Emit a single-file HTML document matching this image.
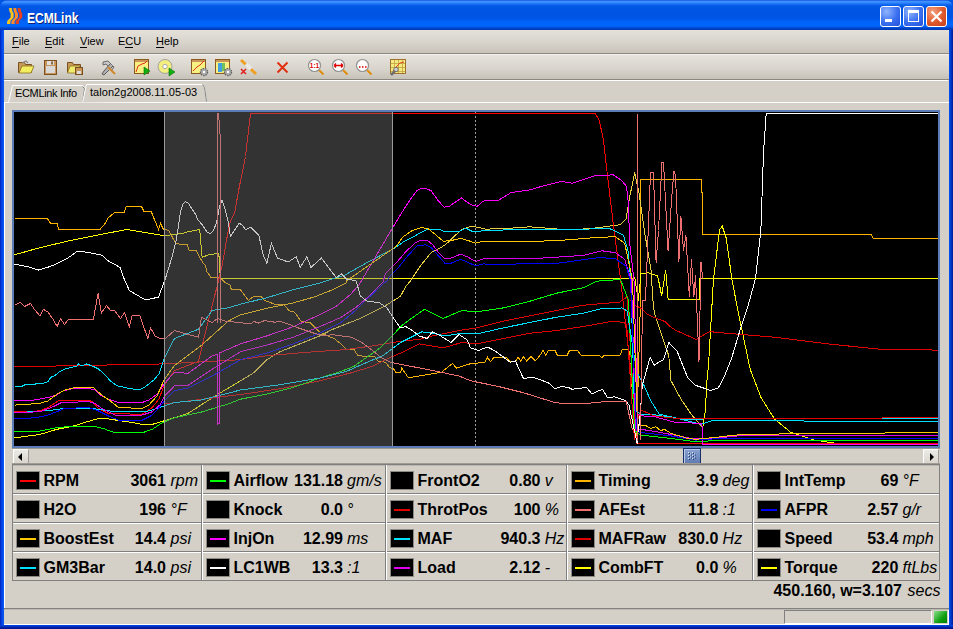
<!DOCTYPE html><html><head><meta charset="utf-8"><style>
*{margin:0;padding:0;box-sizing:border-box}
html,body{width:953px;height:629px;overflow:hidden;background:#0054e3;font-family:"Liberation Sans",sans-serif}
.a{position:absolute}
#title{left:0;top:0;width:953px;height:30px;border-radius:8px 8px 0 0;
 background:linear-gradient(#0a3ed8 0px,#3d8fff 1px,#3d95ff 2px,#1a6ff5 4px,#0058e6 6px,#0054e3 12px,#0055e5 18px,#0061f5 21px,#0066ff 26px,#0058e8 27px,#0046cc 28px,#0038b0 30px)}
#ttext{left:27px;top:9.5px;color:#fff;font-weight:bold;font-size:14px;line-height:16px;transform:scaleX(0.86);transform-origin:0 0;text-shadow:1px 1px 0 #0a1e7a}
.tb{top:6px;width:21px;height:21px;border:1px solid #fff;border-radius:3px;background:radial-gradient(circle at 30% 25%,#8fb4ff,#3a6ff0 55%,#2250d8)}
#client{left:4px;top:30px;width:945px;height:595px;background:#d4d0c8}
#menubar{left:4px;top:30px;width:945px;height:24px;background:linear-gradient(#e4e1da,#d9d5cd 50%,#c8c4ba);border-bottom:1px solid #8c8880}
.menu{top:35px;font-size:11px;color:#000;line-height:13px}
.menu u{text-decoration:none;border-bottom:1px solid #000}
#toolbar{left:4px;top:54px;width:945px;height:26px;background:linear-gradient(#e6e3dc,#d8d4cc 60%,#c6c2b8);border-top:1px solid #f4f2ee;border-bottom:1px solid #8c8880}
#tabline{left:4px;top:80px;width:944px;height:1px;background:#fff}
#panel{left:4px;top:102px;width:945px;height:506px;border-top:1px solid #fff;border-left:1px solid #fff;background:#d4d0c8}
.tab{font-size:11px;color:#000;line-height:13px}
#chart{left:12px;top:110px;width:928px;height:338px;border:2px solid #5b7db7;background:#000;overflow:hidden}
#sb{left:12px;top:448px;width:928px;height:16px;background:#d4d0c8;border-top:1px solid #9c988f}
.btn{position:absolute;top:0;width:16px;height:16px;background:linear-gradient(#ecebe6,#d8d4cc);border-top:1px solid #fff;border-left:1px solid #fff;border-right:1px solid #a09c94;border-bottom:1px solid #a09c94}
.cell{position:absolute;height:29px}
.sw{position:absolute;width:24px;height:19px;background:#000;border:1px solid #8c8a84}
.sw i{position:absolute;left:3px;top:8px;width:16px;height:2px}
.t{position:absolute;font-size:16px;white-space:nowrap;line-height:18px;color:#000}
.b{font-weight:bold}
.it{font-style:italic}
</style></head><body>
<div class="a" id="title"></div>
<svg class="a" style="left:0;top:0" width="30" height="30" viewBox="0 0 30 30">
<path d="M9,8 L11.8,8 L12.6,12 L13.6,13 L13.6,17.5 L10.4,21 L10.2,24 L7,24 L7.2,21 L10.6,17.5 L10.6,13 L9.6,12 Z" fill="#ffc418"/>
<path d="M13.3,8 L16.1,8 L16.9,12 L17.9,13 L17.9,17.5 L14.7,21 L14.5,24 L11.3,24 L11.5,21 L14.9,17.5 L14.9,13 L13.9,12 Z" fill="#ff8a28"/>
<path d="M17.6,8 L20.4,8 L21.2,12 L22.2,13 L22.2,17.5 L19,21 L18.8,24 L15.6,24 L15.8,21 L19.2,17.5 L19.2,13 L18.2,12 Z" fill="#e8401c"/>
</svg>
<div class="a" id="ttext">ECMLink</div>
<div class="a tb" style="left:880px"></div>
<div class="a" style="left:885px;top:19px;width:7px;height:3px;background:#fff"></div>
<div class="a tb" style="left:903px"></div>
<div class="a" style="left:908px;top:10px;width:11px;height:12px;border:1px solid #fff;border-top:3px solid #fff"></div>
<div class="a tb" style="left:926px;background:radial-gradient(circle at 30% 25%,#f5a080,#e0582c 55%,#c8401a)"></div>
<svg class="a" style="left:926px;top:6px" width="21" height="21"><path d="M5.5,5.5 L15.5,15.5 M15.5,5.5 L5.5,15.5" stroke="#fff" stroke-width="2.2"/></svg>
<div class="a" id="client"></div>
<div class="a" id="menubar"></div>
<div class="a menu" style="left:12px"><u>F</u>ile</div>
<div class="a menu" style="left:45px"><u>E</u>dit</div>
<div class="a menu" style="left:80px"><u>V</u>iew</div>
<div class="a menu" style="left:118px">E<u>C</u>U</div>
<div class="a menu" style="left:156px"><u>H</u>elp</div>
<div class="a" id="toolbar"></div>
<div class="a" id="tabline"></div>
<svg class="a" style="left:0;top:54px" width="420" height="26" viewBox="0 54 420 26">
<!-- open folder -->
<g>
<path d="M18.5,62.5 L24.5,62.5 L25.5,64.5 L31.5,64.5 L31.5,72.5 L18.5,72.5 Z" fill="#c89a58" stroke="#7a5020"/>
<path d="M19,73 L22,66 L34,66 L31,73 Z" fill="#f2ee60" stroke="#8a7020" stroke-width="0.8"/>
<path d="M22,63 L26,61 L28,63" fill="none" stroke="#888" stroke-width="1.2"/>
</g>
<!-- floppy -->
<g>
<rect x="44.5" y="60.5" width="12" height="14" fill="#c89458" stroke="#7a5020"/>
<rect x="46" y="66" width="9" height="7" fill="#d8d8d8"/>
<rect x="47" y="61" width="7" height="4" fill="#e0e0e0"/>
<rect x="51" y="61.5" width="2" height="3" fill="#8a6a40"/>
</g>
<!-- folder + floppy -->
<g>
<path d="M67.5,62.5 L72.5,62.5 L73.5,64.5 L80.5,64.5 L80.5,72.5 L67.5,72.5 Z" fill="#c89a58" stroke="#7a5020"/>
<path d="M67.5,73 L70,66 L80,66 L78,73 Z" fill="#f0ec70" stroke="#8a7020" stroke-width="0.8"/>
<rect x="75.5" y="67.5" width="7" height="7" fill="#c89458" stroke="#7a5020"/>
<rect x="77" y="71" width="4" height="3" fill="#ddd"/>
</g>
<!-- tools -->
<g>
<path d="M103,62 L108,61 L114,67 L112,70 L106,64 L103,65 Z" fill="#c8c8c8" stroke="#606060" stroke-width="0.9"/>
<path d="M110,64 L104,71 L102,74 L104,75 L107,72 L113,66" fill="#b0b0b0" stroke="#505050" stroke-width="0.9"/>
<path d="M108,67 L115,74" stroke="#d08a30" stroke-width="2.2"/>
</g>
<!-- chart play -->
<g>
<rect x="134.5" y="59.5" width="14" height="14" fill="#f8f080" stroke="#8a5a20"/>
<rect x="135" y="60" width="13" height="2" fill="#c89458"/>
<path d="M136,72 L138,66 L142,64 L145,63 L147,61" fill="none" stroke="#e03020" stroke-width="1"/>
<path d="M144,67 L150,71 L144,75 Z" fill="#10b010" stroke="#087008" stroke-width="0.6"/>
</g>
<!-- cd play -->
<g>
<circle cx="165" cy="66.5" r="7" fill="#f2ee80" stroke="#a0a0a0"/>
<circle cx="165" cy="66.5" r="2.2" fill="#fff" stroke="#999" stroke-width="0.8"/>
<path d="M169,68 L175,72 L169,76 Z" fill="#10b010" stroke="#087008" stroke-width="0.6"/>
</g>
<!-- chart gear -->
<g>
<rect x="191.5" y="59.5" width="14" height="14" fill="#f8f080" stroke="#8a5a20"/>
<rect x="192" y="60" width="13" height="2" fill="#c89458"/>
<path d="M193,71 L197,67 L200,65 L204,61" fill="none" stroke="#e03020"/>
<circle cx="204" cy="72" r="3.6" fill="#a8a8a8" stroke="#606060" stroke-width="1.2" stroke-dasharray="1.5,1"/>
<circle cx="204" cy="72" r="1.2" fill="#fff"/>
</g>
<!-- chart gear 2 -->
<g>
<rect x="215.5" y="59.5" width="14" height="14" fill="#f8f080" stroke="#8a5a20"/>
<rect x="216" y="60" width="13" height="2" fill="#c89458"/>
<rect x="218" y="63" width="4" height="9" fill="#40a0e0"/>
<rect x="222" y="63" width="3" height="8" fill="#70c060"/>
<circle cx="228" cy="72" r="3.6" fill="#a8a8a8" stroke="#606060" stroke-width="1.2" stroke-dasharray="1.5,1"/>
<circle cx="228" cy="72" r="1.2" fill="#fff"/>
</g>
<!-- pencil x -->
<g>
<path d="M241,60 L256,74" stroke="#f0a020" stroke-width="3"/>
<path d="M246,64 L251,69" stroke="#e8e8e8" stroke-width="4"/>
<path d="M241,69 L246,74 M246,69 L241,74" stroke="#e02020" stroke-width="1.6"/>
</g>
<!-- red X -->
<path d="M277.5,62.5 L287.5,72.5 M287.5,62.5 L277.5,72.5" stroke="#e03010" stroke-width="2"/>
<!-- magnifiers -->
<g>
<line x1="319" y1="70" x2="323.5" y2="74.5" stroke="#e09010" stroke-width="2.2"/>
<circle cx="314.5" cy="65.5" r="6" fill="#fff" stroke="#909090" stroke-width="1.2"/>
<text x="314.5" y="68" font-size="6.5" font-weight="bold" fill="#e00000" text-anchor="middle" font-family="Liberation Sans">1:1</text>
</g>
<g>
<line x1="343" y1="70" x2="347.5" y2="74.5" stroke="#e09010" stroke-width="2.2"/>
<circle cx="338.5" cy="65.5" r="6" fill="#fff" stroke="#909090" stroke-width="1.2"/>
<path d="M334,65.5 L343,65.5 M334,65.5 L336,63.5 M334,65.5 L336,67.5 M343,65.5 L341,63.5 M343,65.5 L341,67.5" stroke="#e00000" stroke-width="1.3"/>
</g>
<g>
<line x1="367" y1="70" x2="371.5" y2="74.5" stroke="#e09010" stroke-width="2.2"/>
<circle cx="362.5" cy="65.5" r="6" fill="#fff" stroke="#909090" stroke-width="1.2"/>
<path d="M359,67 h1.5 M362,67 h1.5 M365,67 h1.5" stroke="#e00000" stroke-width="1.5"/>
</g>
<!-- grid wrench -->
<g>
<rect x="390.5" y="59.5" width="15" height="14" fill="#f4ec80" stroke="#a07030"/>
<path d="M394.5,60 V73 M398.5,60 V73 M402.5,60 V73 M391,63.5 H405 M391,67.5 H405 M391,71.5 H405" stroke="#c0a040" stroke-width="0.8"/>
<path d="M393,71 L397,66 L400,63 L404,62" fill="none" stroke="#e04020"/>
<path d="M391,75 L396,70" stroke="#707070" stroke-width="2.5"/>
<circle cx="396" cy="69.5" r="2.2" fill="#d0d0d0" stroke="#606060" stroke-width="0.8"/>
</g>
</svg>

<div class="a" id="panel"></div>
<svg class="a" style="left:4px;top:82px" width="210" height="22">
<path d="M4.5,20.5 L8.5,3.5 L78.5,3.5 L80.5,6.5 L78.5,20.5" fill="#d4d0c8" stroke="#fff"/>
<path d="M78.5,4.5 L80.5,6.5 L78.5,20.5" fill="none" stroke="#808080"/>
<path d="M78.5,20.5 L82.5,2.5 L198.5,2.5 L200.5,5.5 L202.5,19.5" fill="#d4d0c8" stroke="#fff"/>
<path d="M198.5,2.5 L200.5,5.5 L202.5,19.5" fill="none" stroke="#808080"/>
</svg>
<div class="a tab" style="left:15px;top:87px;letter-spacing:-0.35px">ECMLink Info</div>
<div class="a tab" style="left:90px;top:86px;letter-spacing:0.05px">talon2g2008.11.05-03</div>
<div class="a" id="chart"></div>
<svg class="a" style="left:14px;top:112px" width="924" height="334" viewBox="14 112 924 334">
<line x1="475.5" y1="112" x2="475.5" y2="446" stroke="#a0a0a0" stroke-dasharray="2,2"/>
<g fill="none" shape-rendering="crispEdges" transform="translate(0.5,0.5)">
<polyline points="14.0,217.5 46.6,217.5 50.0,222.8 56.7,222.8 58.0,229.0 99.4,229.0 104.8,222.8 107.5,217.5 114.0,212.0 123.5,212.0 126.0,205.5 140.8,205.5 143.5,211.0 150.7,211.0 158.0,229.0 160.0,222.8 163.0,229.0 168.2,229.7 175.3,243.3 186.5,244.0 188.8,250.4 196.0,250.4 199.2,256.8 202.4,262.3 204.7,264.7 206.3,271.1 210.3,276.6 215.9,277.4 219.8,277.4 223.8,281.4 229.4,284.6 231.0,289.4 240.0,289.2 247.9,299.8 253.2,295.8 261.1,296.4 263.7,299.8 274.3,303.7 283.5,304.3 288.8,310.3 294.1,311.7 300.7,320.9 309.9,322.2 315.2,327.5 319.2,331.5 327.1,335.4 333.7,338.0 340.3,343.3 345.5,348.6 353.5,349.1 357.4,355.2 374.6,356.5 377.2,360.5 385.1,361.8 389.1,367.1 393.0,368.4 395.7,372.3 400.0,372.3 401.2,367.5 407.9,377.3 434.6,372.8 441.3,371.5 452.0,363.0 456.0,367.5 470.0,363.2 484.5,361.8 487.2,356.6 489.8,361.3 493.8,356.6 505.6,356.6 509.6,361.3 514.9,361.3 517.5,356.6 520.2,360.5 522.8,356.0 526.0,360.5 530.7,356.0 534.7,360.5 539.2,355.2 542.6,350.0 545.2,355.2 547.9,350.0 554.5,350.0 557.1,355.2 566.4,355.2 569.0,350.0 576.9,350.0 580.9,355.2 599.4,355.2 601.2,357.1 603.3,355.2 619.2,355.2 621.8,349.2 628.4,349.2 636.0,440.0 640.0,300.0" stroke="#ffb400" stroke-width="1"/>
<polyline points="640.0,300.0 640.2,178.5 700.5,178.5 700.5,192.3 701.7,192.3 701.7,233.5 870.4,233.5 873.0,238.3 938.0,238.3" stroke="#ffb400" stroke-width="1"/>
<polyline points="14.0,254.3 40.0,247.0 70.0,240.0 100.0,234.0 126.0,229.0 145.0,232.0 164.0,235.3 174.5,233.7 182.5,232.9 185.7,231.7 199.2,229.0 201.6,256.8 207.9,254.4 218.3,252.8 219.8,276.6 220.6,278.2 634.0,278.2 634.2,276.3 637.7,300.0 639.6,282.9 640.5,273.1 647.7,272.3 657.2,275.5 661.2,295.4 665.2,269.2 667.6,298.6 698.8,299.3 699.5,278.0 938.0,278.0" stroke="#ffff00" stroke-width="1"/>
<polyline points="240.0,380.3 253.2,372.3 266.4,359.2 279.6,351.2 292.8,346.0 306.0,340.7 319.2,335.4 332.3,328.8 345.5,323.5 358.7,318.3 371.9,311.7 385.1,305.1 400.0,295.8 405.2,286.0 410.3,280.0 420.0,265.3 430.5,252.2 441.0,246.9 447.9,241.7 454.9,234.7 461.9,228.6 470.7,225.9 477.7,226.8 485.0,228.6 502.7,228.2 529.4,226.3 569.5,229.5 596.2,227.4 620.2,224.1 625.5,218.8 629.5,194.8 634.3,172.1 638.9,194.8 644.2,232.2 650.9,272.2 652.0,296.2 653.9,312.4 668.3,355.4 670.4,380.0 680.4,398.5 690.5,413.6 700.6,425.3 702.3,427.9" stroke="#e8d040" stroke-width="1"/>
<polyline points="702.3,427.0 704.8,410.2 706.5,380.0 708.0,365.0 712.9,280.0 719.0,229.5 721.7,225.5 725.7,237.5 731.6,280.0 739.0,318.0 749.7,368.8 760.4,396.8 773.8,418.2 789.8,431.5 813.8,439.5 840.5,443.6 938.0,444.0" stroke="#ffff00" stroke-width="1"/>
<polyline points="14.0,437.3 39.2,434.0 56.0,428.9 72.8,425.6 86.2,421.4 97.9,418.0 108.0,418.5 128.2,421.4 141.6,423.9 151.7,423.9 160.1,421.4 174.0,417.2 187.6,412.8 217.0,394.0 240.0,380.3" stroke="#ffff00" stroke-width="1"/>
<polyline points="14.0,411.3 39.2,410.4 47.6,407.1 57.7,400.4 64.4,399.5 87.9,399.5 92.9,402.0 97.9,407.9 108.0,413.0 141.6,413.8 151.7,407.1 158.4,398.7 163.4,385.3 174.0,370.1 198.0,360.8 206.0,327.4 216.7,285.4 221.4,266.3 227.8,229.7 230.2,220.2 234.2,212.3 238.1,190.0 245.0,156.0 250.0,113.0 594.8,113.0 598.8,120.0 602.8,138.7 606.8,173.4 612.2,218.8 620.2,280.0 629.5,363.4 633.5,403.5 636.0,443.0 938.0,443.0" stroke="#ff0000" stroke-width="1"/>
<polyline points="14.0,366.3 164.0,363.4 240.0,359.2 266.4,355.2 306.0,351.8 345.5,349.1 371.9,345.4 393.0,342.0 400.0,340.7 418.6,338.9 431.9,335.4 458.6,330.0 476.0,327.4 502.7,320.7 529.4,315.4 556.1,310.0 582.8,304.7 610.0,302.4 619.5,301.5 626.7,296.2 632.0,380.0 634.0,440.0" stroke="#e00000" stroke-width="1"/>
<polyline points="630.0,300.0 635.3,305.3 640.5,307.7 647.2,313.9 650.0,315.3 656.8,318.2 664.4,321.0 669.2,325.8 675.6,330.0 695.6,338.9 708.9,331.1 720.0,332.2 773.8,336.7 827.2,343.4 880.6,348.8 938.0,349.6" stroke="#e00000" stroke-width="1"/>
<polyline points="163.5,403.5 240.0,394.0 279.6,388.2 319.2,380.3 350.8,372.3 371.9,365.8 387.8,357.8 400.0,352.6 418.6,343.4 442.6,347.4 461.3,342.0 476.0,343.4 502.7,338.0 529.4,332.7 556.1,330.0 582.8,326.0 612.9,320.6 623.4,322.0 626.2,324.8 633.5,432.9 640.1,409.4 653.6,415.3 678.8,418.3 732.5,417.8 938.0,417.4" stroke="#e00000" stroke-width="1"/>
<polyline points="14.0,431.4 39.2,430.6 56.0,427.2 72.8,425.6 92.9,425.6 103.0,428.1 114.7,432.3 141.6,432.3 151.7,428.9 161.8,422.2 174.0,417.2 201.0,411.5 227.6,403.5 240.0,398.7 266.4,393.5 292.8,386.9 319.2,377.6 340.3,371.0 353.5,365.8 366.6,356.5 379.8,347.3 393.0,334.1 400.0,326.2 405.2,322.0 424.0,308.7 442.6,318.0 461.3,310.0 476.0,311.4 502.7,307.4 529.4,300.7 556.1,292.7 582.8,287.3 596.2,280.7 620.0,279.0 628.0,300.0 634.0,430.0 640.1,434.6 670.4,437.9 695.6,441.3 720.7,439.6 938.0,439.5" stroke="#00ff00" stroke-width="1"/>
<polyline points="14.0,386.1 20.7,386.1 24.1,384.4 34.1,383.6 42.5,382.7 47.6,381.1 50.1,376.9 54.3,375.2 59.3,371.0 64.4,368.5 71.1,366.8 76.1,366.0 77.8,363.4 81.2,365.4 86.2,363.4 92.9,366.0 97.9,368.5 103.0,372.7 109.7,380.2 116.4,385.3 128.2,387.8 138.2,389.5 145.0,386.1 153.4,379.4 158.4,373.5 161.8,363.4 164.3,356.7 167.6,350.0 174.0,338.0 198.0,328.7 211.6,310.0 227.6,307.4 240.0,303.7 266.4,297.2 292.8,289.2 319.2,282.6 333.0,278.0 343.8,274.9 365.0,262.9 392.7,248.2 393.7,247.8 402.5,241.7 411.2,237.3 420.0,232.1 427.0,228.6 439.2,228.6 443.6,231.2 458.4,231.2 465.4,227.7 472.4,231.2 482.9,230.3 502.7,229.5 556.1,229.0 609.5,228.2 622.9,234.8 627.7,250.9 630.3,280.0 634.0,410.0 640.1,413.6 655.3,414.4 680.4,418.6 938.0,417.5" stroke="#00e0ff" stroke-width="1"/>
<polyline points="14.0,412.1 30.8,411.3 47.6,410.1 64.4,407.9 87.9,407.6 97.9,408.8 114.7,411.3 145.0,411.3 156.7,407.9 174.0,402.0 201.0,399.5 240.0,389.5 279.6,384.2 319.2,377.6 345.5,371.0 366.6,361.8 382.5,355.2 393.0,347.3 400.0,342.0 405.2,339.4 421.2,331.4 431.9,332.7 445.3,335.4 461.3,332.7 476.0,333.5 502.7,327.4 529.4,322.0 556.1,316.7 582.8,312.7 601.5,307.9 619.5,308.1 621.0,307.2 626.7,310.5 636.2,371.5 643.5,385.0 650.2,400.1 658.6,413.6 678.8,418.3 700.6,423.7 710.7,420.3 938.0,420.8" stroke="#00e0ff" stroke-width="1"/>
<polyline points="14.0,400.4 34.1,399.5 47.6,397.0 56.0,394.5 62.7,390.3 71.1,388.3 89.6,388.3 94.6,389.5 99.6,394.5 108.0,398.7 118.1,402.0 141.6,402.0 148.3,399.5 156.7,393.7 163.4,383.6 174.0,371.8 187.6,372.8 211.6,355.4 216.5,353.8 216.5,423.8 219.0,423.0 219.0,352.5 240.0,343.3 266.4,335.4 292.8,326.2 319.2,314.3 335.0,306.4 350.8,293.2 358.7,284.0 392.9,226.0 402.5,210.2 411.2,197.1 416.5,190.1 420.0,188.0 425.2,188.0 430.5,190.1 437.4,199.7 443.6,206.7 448.8,205.8 454.9,201.5 461.0,197.6 466.3,201.5 472.4,205.0 476.8,205.8 482.9,200.6 486.7,200.0 497.4,200.0 510.7,192.0 529.4,189.4 542.8,185.4 561.4,180.9 572.0,182.8 593.5,175.5 612.7,174.3 620.7,179.6 625.4,185.1 627.3,194.7 629.5,245.5 633.5,280.0 637.0,414.0 640.1,415.3 653.6,416.1 675.4,422.0 700.6,422.8 702.0,427.0 702.0,444.0 938.0,444.0" stroke="#ff00ff" stroke-width="1"/>
<polyline points="14.0,412.1 39.2,411.3 52.6,406.2 61.0,402.0 87.9,401.2 94.6,402.9 101.3,407.9 114.7,414.6 141.6,414.6 151.7,411.3 160.1,403.7 164.3,395.3 174.0,385.3 187.6,384.8 211.6,368.8 240.0,351.2 266.4,344.6 292.8,336.7 319.2,326.2 340.3,317.0 356.1,306.4 366.6,297.2 382.5,281.3 385.0,273.1 395.5,262.7 406.0,250.4 414.7,242.6 420.0,239.6 427.0,239.9 432.2,244.3 437.4,251.3 444.4,258.3 451.4,257.4 460.2,253.6 467.2,256.5 475.0,260.9 482.9,258.3 502.7,257.5 542.8,257.5 582.8,254.9 601.5,250.3 614.9,252.2 624.2,258.9 628.2,272.2 631.0,280.0 635.0,428.0 640.1,428.7 660.3,432.0 690.5,437.9 704.0,438.8 737.5,435.4 938.0,435.0" stroke="#e000f0" stroke-width="1"/>
<polyline points="14.0,418.5 35.8,417.2 47.6,414.6 56.0,411.3 64.4,407.9 87.9,407.1 97.9,410.4 108.0,415.5 118.1,419.7 141.6,419.7 151.7,414.6 160.1,405.4 164.3,399.5 174.0,390.3 187.6,387.5 211.6,375.5 240.0,359.2 266.4,352.6 292.8,343.3 319.2,332.8 340.3,322.2 356.1,309.0 366.6,298.5 385.1,281.3 386.5,280.7 388.5,276.6 397.2,267.9 407.7,254.8 416.5,245.5 425.2,244.3 430.5,246.9 437.4,254.8 444.4,262.7 449.7,263.0 454.9,260.9 460.2,258.8 467.2,261.8 475.0,265.3 482.9,263.5 502.7,263.7 556.1,262.9 598.8,257.0 614.9,258.3 625.5,265.5 630.0,280.0 636.0,430.0 640.1,432.0 670.4,435.4 695.6,439.6 720.7,437.9 938.0,437.5" stroke="#0000ff" stroke-width="1"/>
<polyline points="14.0,404.6 39.2,402.9 47.6,400.4 57.7,392.8 64.4,389.5 76.1,386.6 92.9,386.9 96.3,390.3 101.3,394.5 109.7,400.4 118.1,407.1 141.6,407.9 148.3,404.6 156.7,395.3 163.4,379.4 174.0,365.1 201.0,344.8 227.6,320.7 240.0,314.3 266.4,307.7 292.8,302.4 313.9,296.4 332.3,289.2 345.5,282.6 346.5,280.0 395.5,246.0 402.5,236.4 411.2,230.3 420.0,227.3 427.0,227.7 435.7,234.7 442.7,240.8 451.4,239.9 460.2,237.8 467.2,239.9 475.0,242.6 482.9,240.8 502.7,241.5 556.1,240.2 596.2,237.0 614.9,236.2 624.2,242.8 628.2,261.5 632.0,280.0 637.0,425.0 640.1,425.3 645.2,425.0 650.2,427.9 655.3,426.2 660.3,430.4 663.7,428.7 670.4,432.9 687.2,437.9 695.6,438.8 704.0,437.9 714.0,437.1 734.2,434.6 757.7,433.7 938.0,432.0" stroke="#ffc800" stroke-width="1"/>
<polyline points="14.0,263.7 27.4,266.3 38.0,269.5 48.7,266.3 54.0,264.2 67.4,257.5 76.7,250.9 86.0,251.6 102.0,254.9 107.5,260.2 119.5,266.9 123.5,278.0 128.8,290.0 144.8,299.4 158.0,296.7 164.9,278.0 171.4,256.8 176.1,237.7 180.1,210.7 182.5,203.5 184.9,201.1 188.0,202.7 191.2,208.3 195.2,213.8 196.8,218.6 201.6,224.2 206.3,231.3 209.5,233.2 212.7,230.5 215.9,222.6 219.1,205.9 221.4,199.5 224.6,209.1 227.8,221.8 229.9,236.1 235.0,228.2 238.9,222.6 242.1,225.0 245.0,229.0 250.3,226.8 258.4,234.8 262.4,253.5 266.4,262.9 270.9,242.8 277.0,257.5 287.7,261.5 295.7,256.2 299.7,266.9 306.4,256.2 310.4,266.9 321.0,257.5 327.8,266.9 335.8,277.0 341.0,273.5 346.5,278.9 350.5,279.3 355.8,280.7 359.8,295.4 366.5,300.7 378.5,302.0 386.5,307.4 393.2,318.0 399.9,327.4 405.2,326.0 411.9,330.0 418.6,335.4 426.6,338.0 431.9,331.4 440.0,335.4 450.6,342.0 458.6,334.0 466.6,339.4 470.0,347.3 477.9,350.0 487.2,346.5 493.8,350.0 503.0,356.6 509.6,361.8 514.9,360.5 522.8,377.7 533.4,377.1 539.2,379.0 549.2,383.0 554.5,388.2 561.1,386.1 567.7,386.9 571.6,388.8 586.2,386.9 591.4,393.5 596.7,390.9 602.0,388.8 607.3,397.5 613.9,396.2 625.0,400.1 628.4,404.3 636.8,443.5 637.6,430.4 639.3,418.6 641.8,385.0 649.6,356.8 653.6,364.8 657.6,362.1 663.0,359.4 668.3,342.0 676.3,350.0 687.0,376.8 695.0,384.8 703.0,387.5 709.7,390.0 717.7,387.5 723.0,378.0 731.0,358.0 739.0,331.4 747.0,307.4 755.0,278.0 760.4,229.5 763.0,152.0 765.7,113.3 938.0,113.3" stroke="#ffffff" stroke-width="1"/>
<polyline points="14.0,304.7 20.0,302.0 24.0,306.0 30.0,303.0 34.0,309.0 39.4,315.4 43.0,309.0 47.4,311.4 52.0,318.0 56.7,326.0 60.0,318.0 64.0,324.0 67.4,319.4 80.0,319.0 92.8,319.4 97.6,292.7 100.8,312.7 106.0,305.0 110.0,310.0 114.0,310.0 120.0,318.0 124.0,312.0 128.8,326.0 131.5,315.4 139.5,315.4 143.0,326.0 147.5,338.0 150.0,327.4 155.0,336.0 159.5,338.0 164.9,338.0 174.0,330.0 187.6,334.0 198.0,336.7 201.0,316.7 211.6,322.0 217.0,318.0 225.0,320.7 240.0,322.2 250.6,323.5 253.2,320.9 258.5,322.7 263.7,320.1 274.3,321.7 279.6,320.9 287.5,323.5 298.0,327.5 313.9,332.8 324.4,335.4 332.3,334.1 340.3,335.4 350.8,336.7 361.4,342.0 371.9,349.9 379.8,356.5 390.4,361.8 400.0,363.9 405.2,364.8 431.9,370.0 458.6,375.5 470.0,380.3 496.4,385.6 522.8,392.2 543.9,398.8 554.5,402.0 561.1,402.8 580.9,403.5 602.0,401.4 625.8,401.4 632.0,430.0" stroke="#f07070" stroke-width="1"/>
<polyline points="217.0,322.0 217.0,113.0 218.0,113.0 220.0,140.0 220.0,322.0" stroke="#f07070" stroke-width="1"/>
<polyline points="637.4,113.0 637.4,440.0" stroke="#f07070" stroke-width="1"/>
<polyline points="636.5,140.0 636.5,440.0" stroke="#f07070" stroke-width="1"/>
<polyline points="645.0,300.0 650.0,172.4 653.0,172.4 655.6,262.0 658.0,230.0 661.5,161.6 663.0,161.6 667.6,250.9 671.0,200.0 673.5,170.3 675.0,175.0 678.4,261.2 680.3,215.1 683.0,250.0 685.4,235.0 688.9,296.7 691.0,258.9 693.3,296.7 695.0,275.0 698.5,361.0 700.5,261.2 702.2,278.9" stroke="#f07070" stroke-width="1"/>
<polyline points="640.0,440.0 642.0,300.0 645.0,300.0" stroke="#f07070" stroke-width="1"/>
<polyline points="640.1,409.4 653.6,415.3 678.8,418.3 732.5,417.8 938.0,417.4" stroke="#e00000" stroke-width="1"/>
</g>
<rect x="165" y="112" width="227" height="334" fill="rgba(122,122,122,0.42)"/>
<line x1="164.5" y1="112" x2="164.5" y2="446" stroke="#9a9a9a"/>
<line x1="392.5" y1="112" x2="392.5" y2="446" stroke="#9a9a9a"/></svg>
<div class="a" id="sb"><div class="btn" style="left:1px"></div><div class="btn" style="left:911px"></div></div>
<svg class="a" style="left:18px;top:453px" width="6" height="9"><path d="M4,0 L4,8 L0,4 Z" fill="#000"/></svg>
<svg class="a" style="left:929px;top:453px" width="6" height="9"><path d="M1,0 L1,8 L5,4 Z" fill="#000"/></svg>
<div class="a" style="left:683px;top:448px;width:18px;height:16px;background:linear-gradient(#8aa2d0,#5f7cb4);border:1px solid #18306a;box-shadow:inset 1px 1px 0 #b8c8e8"></div>
<svg class="a" style="left:688px;top:452px" width="9" height="8"><rect x="0" y="0" width="1" height="1" fill="#dfe8f8"/><rect x="1" y="1" width="1" height="1" fill="#203870"/><rect x="0" y="3" width="1" height="1" fill="#dfe8f8"/><rect x="1" y="4" width="1" height="1" fill="#203870"/><rect x="0" y="6" width="1" height="1" fill="#dfe8f8"/><rect x="1" y="7" width="1" height="1" fill="#203870"/><rect x="4" y="0" width="1" height="1" fill="#dfe8f8"/><rect x="5" y="1" width="1" height="1" fill="#203870"/><rect x="4" y="3" width="1" height="1" fill="#dfe8f8"/><rect x="5" y="4" width="1" height="1" fill="#203870"/><rect x="4" y="6" width="1" height="1" fill="#dfe8f8"/><rect x="5" y="7" width="1" height="1" fill="#203870"/><rect x="2" y="1.5" width="1" height="1" fill="#dfe8f8"/><rect x="3" y="2.5" width="1" height="1" fill="#203870"/><rect x="2" y="4.5" width="1" height="1" fill="#dfe8f8"/><rect x="3" y="5.5" width="1" height="1" fill="#203870"/><rect x="6" y="1.5" width="1" height="1" fill="#dfe8f8"/><rect x="7" y="2.5" width="1" height="1" fill="#203870"/><rect x="6" y="4.5" width="1" height="1" fill="#dfe8f8"/><rect x="7" y="5.5" width="1" height="1" fill="#203870"/></svg>
<div class="a" style="left:12px;top:463px;width:928px;height:1px;background:#a09c94"></div>
<div class="a" style="left:13px;top:465px;width:926px;height:1px;background:#bcb8b0"></div>
<div class="a" style="left:12px;top:464px;width:928px;height:117px;border-top:1px solid #808080;border-left:1px solid #808080;border-bottom:1px solid #808080;border-right:1px solid #808080"></div>
<div class="a" style="left:13px;top:493px;width:926px;height:1px;background:#808080"></div>
<div class="a" style="left:13px;top:494px;width:926px;height:1px;background:#fff"></div>
<div class="a" style="left:13px;top:522px;width:926px;height:1px;background:#808080"></div>
<div class="a" style="left:13px;top:523px;width:926px;height:1px;background:#fff"></div>
<div class="a" style="left:13px;top:551px;width:926px;height:1px;background:#808080"></div>
<div class="a" style="left:13px;top:552px;width:926px;height:1px;background:#fff"></div>
<div class="a" style="left:201px;top:465px;width:1px;height:115px;background:#808080"></div>
<div class="a" style="left:202px;top:465px;width:1px;height:115px;background:#fff"></div>
<div class="a" style="left:385px;top:465px;width:1px;height:115px;background:#808080"></div>
<div class="a" style="left:386px;top:465px;width:1px;height:115px;background:#fff"></div>
<div class="a" style="left:566px;top:465px;width:1px;height:115px;background:#808080"></div>
<div class="a" style="left:567px;top:465px;width:1px;height:115px;background:#fff"></div>
<div class="a" style="left:752px;top:465px;width:1px;height:115px;background:#808080"></div>
<div class="a" style="left:753px;top:465px;width:1px;height:115px;background:#fff"></div>
<div class="sw" style="left:16px;top:471px"><i style="background:#ff0000"></i></div>
<div class="t b" style="left:43.5px;top:472px">RPM</div>
<div class="t b" style="right:787px;top:472px">3061</div>
<div class="t it" style="left:170.5px;top:472px">rpm</div>
<div class="sw" style="left:206px;top:471px"><i style="background:#00ff00"></i></div>
<div class="t b" style="left:233.5px;top:472px">Airflow</div>
<div class="t b" style="right:610px;top:472px">131.18</div>
<div class="t it" style="left:347px;top:472px">gm/s</div>
<div class="sw" style="left:390px;top:471px"></div>
<div class="t b" style="left:417.5px;top:472px">FrontO2</div>
<div class="t b" style="right:412.5px;top:472px">0.80</div>
<div class="t it" style="left:544.7px;top:472px">v</div>
<div class="sw" style="left:571px;top:471px"><i style="background:#ffb400"></i></div>
<div class="t b" style="left:598.5px;top:472px">Timing</div>
<div class="t b" style="right:234.70000000000005px;top:472px">3.9</div>
<div class="t it" style="left:722.6px;top:472px">deg</div>
<div class="sw" style="left:757px;top:471px"></div>
<div class="t b" style="left:784.5px;top:472px">IntTemp</div>
<div class="t b" style="right:54.700000000000045px;top:472px">69</div>
<div class="t it" style="left:902.5px;top:472px">°F</div>
<div class="sw" style="left:16px;top:500px"></div>
<div class="t b" style="left:43.5px;top:501px">H2O</div>
<div class="t b" style="right:787px;top:501px">196</div>
<div class="t it" style="left:170.5px;top:501px">°F</div>
<div class="sw" style="left:206px;top:500px"></div>
<div class="t b" style="left:233.5px;top:501px">Knock</div>
<div class="t b" style="right:610px;top:501px">0.0</div>
<div class="t it" style="left:347px;top:501px">°</div>
<div class="sw" style="left:390px;top:500px"><i style="background:#e00000"></i></div>
<div class="t b" style="left:417.5px;top:501px">ThrotPos</div>
<div class="t b" style="right:412.5px;top:501px">100</div>
<div class="t it" style="left:544.7px;top:501px">%</div>
<div class="sw" style="left:571px;top:500px"><i style="background:#f07070"></i></div>
<div class="t b" style="left:598.5px;top:501px">AFEst</div>
<div class="t b" style="right:234.70000000000005px;top:501px">11.8</div>
<div class="t it" style="left:722.6px;top:501px">:1</div>
<div class="sw" style="left:757px;top:500px"><i style="background:#0000ff"></i></div>
<div class="t b" style="left:784.5px;top:501px">AFPR</div>
<div class="t b" style="right:54.700000000000045px;top:501px">2.57</div>
<div class="t it" style="left:902.5px;top:501px">g/r</div>
<div class="sw" style="left:16px;top:529px"><i style="background:#ffc800"></i></div>
<div class="t b" style="left:43.5px;top:530px">BoostEst</div>
<div class="t b" style="right:787px;top:530px">14.4</div>
<div class="t it" style="left:170.5px;top:530px">psi</div>
<div class="sw" style="left:206px;top:529px"><i style="background:#ff00ff"></i></div>
<div class="t b" style="left:233.5px;top:530px">InjOn</div>
<div class="t b" style="right:610px;top:530px">12.99</div>
<div class="t it" style="left:347px;top:530px">ms</div>
<div class="sw" style="left:390px;top:529px"><i style="background:#00e0ff"></i></div>
<div class="t b" style="left:417.5px;top:530px">MAF</div>
<div class="t b" style="right:412.5px;top:530px">940.3</div>
<div class="t it" style="left:544.7px;top:530px">Hz</div>
<div class="sw" style="left:571px;top:529px"><i style="background:#e00000"></i></div>
<div class="t b" style="left:598.5px;top:530px">MAFRaw</div>
<div class="t b" style="right:234.70000000000005px;top:530px">830.0</div>
<div class="t it" style="left:722.6px;top:530px">Hz</div>
<div class="sw" style="left:757px;top:529px"></div>
<div class="t b" style="left:784.5px;top:530px">Speed</div>
<div class="t b" style="right:54.700000000000045px;top:530px">53.4</div>
<div class="t it" style="left:902.5px;top:530px">mph</div>
<div class="sw" style="left:16px;top:558px"><i style="background:#00e0ff"></i></div>
<div class="t b" style="left:43.5px;top:559px">GM3Bar</div>
<div class="t b" style="right:787px;top:559px">14.0</div>
<div class="t it" style="left:170.5px;top:559px">psi</div>
<div class="sw" style="left:206px;top:558px"><i style="background:#ffffff"></i></div>
<div class="t b" style="left:233.5px;top:559px">LC1WB</div>
<div class="t b" style="right:610px;top:559px">13.3</div>
<div class="t it" style="left:347px;top:559px">:1</div>
<div class="sw" style="left:390px;top:558px"><i style="background:#e000f0"></i></div>
<div class="t b" style="left:417.5px;top:559px">Load</div>
<div class="t b" style="right:412.5px;top:559px">2.12</div>
<div class="t it" style="left:544.7px;top:559px">-</div>
<div class="sw" style="left:571px;top:558px"><i style="background:#ffff00"></i></div>
<div class="t b" style="left:598.5px;top:559px">CombFT</div>
<div class="t b" style="right:234.70000000000005px;top:559px">0.0</div>
<div class="t it" style="left:722.6px;top:559px">%</div>
<div class="sw" style="left:757px;top:558px"><i style="background:#ffff00"></i></div>
<div class="t b" style="left:784.5px;top:559px">Torque</div>
<div class="t b" style="right:54.700000000000045px;top:559px">220</div>
<div class="t it" style="left:902.5px;top:559px">ftLbs</div>
<div class="t b" style="right:51px;top:582px">450.160, w=3.107</div>
<div class="t it" style="left:907.5px;top:582px">secs</div>
<div class="a" style="left:4px;top:608px;width:945px;height:1px;background:#848280"></div>
<div class="a" style="left:4px;top:609px;width:945px;height:1px;background:#bcb8b0"></div>
<div class="a" style="left:0;top:30px;width:4px;height:599px;background:linear-gradient(90deg,#0020c0,#0040e0 40%,#0a5cf8)"></div>
<div class="a" style="left:949px;top:30px;width:4px;height:599px;background:linear-gradient(90deg,#0050f0,#0038c8 50%,#001c98)"></div>
<div class="a" style="left:0;top:625px;width:953px;height:4px;background:linear-gradient(#0048e8,#0028b0 50%,#000c88)"></div>
<div class="a" style="left:948px;top:610px;width:1px;height:15px;background:#fff"></div>
<div class="a" style="left:4px;top:624px;width:945px;height:1px;background:#fff"></div>
<div class="a" style="left:784px;top:610px;width:148px;height:14px;border-top:1px solid #808080;border-left:1px solid #808080;border-bottom:1px solid #fff;border-right:1px solid #fff"></div>
<div class="a" style="left:934px;top:611px;width:13px;height:12px;background:linear-gradient(135deg,#8ee08e,#10a010 60%,#008000)"></div>
</body></html>
